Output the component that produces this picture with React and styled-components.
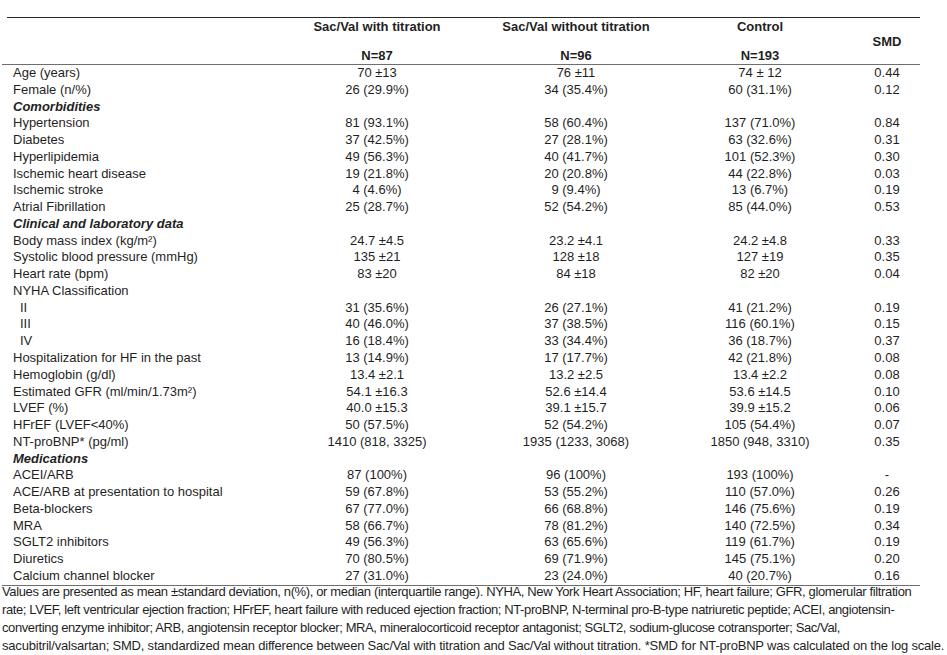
import React from 'react';
import styled, { createGlobalStyle } from 'styled-components';

const GlobalStyle = createGlobalStyle`
  body {
    margin: 0;
    background: #fff;
    color: #1f1f1f;
    font-family: "Liberation Sans", Arial, sans-serif;
    font-size: 13px;
  }
`;

const Page = styled.div`
  padding: 17px 0 0 2px;
  width: 945px;
`;

const Table = styled.div`
  width: 918px;
`;

const TopRule = styled.div`
  margin-left: 5px;
  border-top: 1px solid #2a2a2a;
`;

const cols = '266px 218px 180px 188px 66px';

const Header = styled.div`
  display: grid;
  grid-template-columns: ${cols};
  height: 46px;
  border-bottom: 1px solid #6e6e6e;
  font-weight: bold;
`;

const HeadCell = styled.div`
  display: flex;
  flex-direction: column;
  justify-content: ${(p) => (p.$middle ? 'center' : 'space-between')};
  align-items: center;
  line-height: 16px;
  padding-top: 1px;
`;

const Row = styled.div`
  display: grid;
  grid-template-columns: ${cols};
  height: 16.77px;
  line-height: 16.77px;
  white-space: nowrap;
`;

const Label = styled.div`
  padding-left: ${(p) => (p.$indent ? '18px' : '11px')};
  font-weight: ${(p) => (p.$section ? 'bold' : 'normal')};
  font-style: ${(p) => (p.$section ? 'italic' : 'normal')};
`;

const Value = styled.div`
  text-align: center;
`;

const BottomRule = styled.div`
  border-top: 1px solid #6e6e6e;
`;

const Note = styled.div`
  margin-top: -3px;
  line-height: 18px;
  white-space: nowrap;
`;

const NoteLine = styled.div`
  letter-spacing: ${(p) => p.$spacing}px;
`;

const rows = [
  ['Age (years)', '70 ±13', '76 ±11', '74 ± 12', '0.44'],
  ['Female (n/%)', '26 (29.9%)', '34 (35.4%)', '60 (31.1%)', '0.12'],
  { section: 'Comorbidities' },
  ['Hypertension', '81 (93.1%)', '58 (60.4%)', '137 (71.0%)', '0.84'],
  ['Diabetes', '37 (42.5%)', '27 (28.1%)', '63 (32.6%)', '0.31'],
  ['Hyperlipidemia', '49 (56.3%)', '40 (41.7%)', '101 (52.3%)', '0.30'],
  ['Ischemic heart disease', '19 (21.8%)', '20 (20.8%)', '44 (22.8%)', '0.03'],
  ['Ischemic stroke', '4 (4.6%)', '9 (9.4%)', '13 (6.7%)', '0.19'],
  ['Atrial Fibrillation', '25 (28.7%)', '52 (54.2%)', '85 (44.0%)', '0.53'],
  { section: 'Clinical and laboratory data' },
  ['Body mass index (kg/m²)', '24.7 ±4.5', '23.2 ±4.1', '24.2 ±4.8', '0.33'],
  ['Systolic blood pressure (mmHg)', '135 ±21', '128 ±18', '127 ±19', '0.35'],
  ['Heart rate (bpm)', '83 ±20', '84 ±18', '82 ±20', '0.04'],
  ['NYHA Classification', '', '', '', ''],
  ['II', '31 (35.6%)', '26 (27.1%)', '41 (21.2%)', '0.19', true],
  ['III', '40 (46.0%)', '37 (38.5%)', '116 (60.1%)', '0.15', true],
  ['IV', '16 (18.4%)', '33 (34.4%)', '36 (18.7%)', '0.37', true],
  ['Hospitalization for HF in the past', '13 (14.9%)', '17 (17.7%)', '42 (21.8%)', '0.08'],
  ['Hemoglobin (g/dl)', '13.4 ±2.1', '13.2 ±2.5', '13.4 ±2.2', '0.08'],
  ['Estimated GFR (ml/min/1.73m²)', '54.1 ±16.3', '52.6 ±14.4', '53.6 ±14.5', '0.10'],
  ['LVEF (%)', '40.0 ±15.3', '39.1 ±15.7', '39.9 ±15.2', '0.06'],
  ['HFrEF (LVEF<40%)', '50 (57.5%)', '52 (54.2%)', '105 (54.4%)', '0.07'],
  ['NT-proBNP* (pg/ml)', '1410 (818, 3325)', '1935 (1233, 3068)', '1850 (948, 3310)', '0.35'],
  { section: 'Medications' },
  ['ACEI/ARB', '87 (100%)', '96 (100%)', '193 (100%)', '-'],
  ['ACE/ARB at presentation to hospital', '59 (67.8%)', '53 (55.2%)', '110 (57.0%)', '0.26'],
  ['Beta-blockers', '67 (77.0%)', '66 (68.8%)', '146 (75.6%)', '0.19'],
  ['MRA', '58 (66.7%)', '78 (81.2%)', '140 (72.5%)', '0.34'],
  ['SGLT2 inhibitors', '49 (56.3%)', '63 (65.6%)', '119 (61.7%)', '0.19'],
  ['Diuretics', '70 (80.5%)', '69 (71.9%)', '145 (75.1%)', '0.20'],
  ['Calcium channel blocker', '27 (31.0%)', '23 (24.0%)', '40 (20.7%)', '0.16'],
];

// footnote lines as broken in the source, with the tracking each one needs
const notes = [
  ['Values are presented as mean ±standard deviation, n(%), or median (interquartile range). NYHA, New York Heart Association; HF, heart failure; GFR, glomerular filtration', -0.37],
  ['rate; LVEF, left ventricular ejection fraction; HFrEF, heart failure with reduced ejection fraction; NT-proBNP, N-terminal pro-B-type natriuretic peptide; ACEI, angiotensin-', -0.39],
  ['converting enzyme inhibitor; ARB, angiotensin receptor blocker; MRA, mineralocorticoid receptor antagonist; SGLT2, sodium-glucose cotransporter; Sac/Val,', -0.4],
  ['sacubitril/valsartan; SMD, standardized mean difference between Sac/Val with titration and Sac/Val without titration. *SMD for NT-proBNP was calculated on the log scale.', -0.2],
];

const App = () => (
  <>
    <GlobalStyle />
    <Page>
      <Table>
        <TopRule />
        <Header>
          <div />
          <HeadCell>
            <span>Sac/Val with titration</span>
            <span>N=87</span>
          </HeadCell>
          <HeadCell>
            <span>Sac/Val without titration</span>
            <span>N=96</span>
          </HeadCell>
          <HeadCell>
            <span>Control</span>
            <span>N=193</span>
          </HeadCell>
          <HeadCell $middle>
            <span>SMD</span>
          </HeadCell>
        </Header>
        {rows.map((r, i) =>
          r.section ? (
            <Row key={i}>
              <Label $section>{r.section}</Label>
            </Row>
          ) : (
            <Row key={i}>
              <Label $indent={r[5]}>{r[0]}</Label>
              <Value>{r[1]}</Value>
              <Value>{r[2]}</Value>
              <Value>{r[3]}</Value>
              <Value>{r[4]}</Value>
            </Row>
          )
        )}
        <BottomRule />
      </Table>
      <Note>
        {notes.map(([text, spacing], i) => (
          <NoteLine key={i} $spacing={spacing}>
            {text}
          </NoteLine>
        ))}
      </Note>
    </Page>
  </>
);

export default App;
